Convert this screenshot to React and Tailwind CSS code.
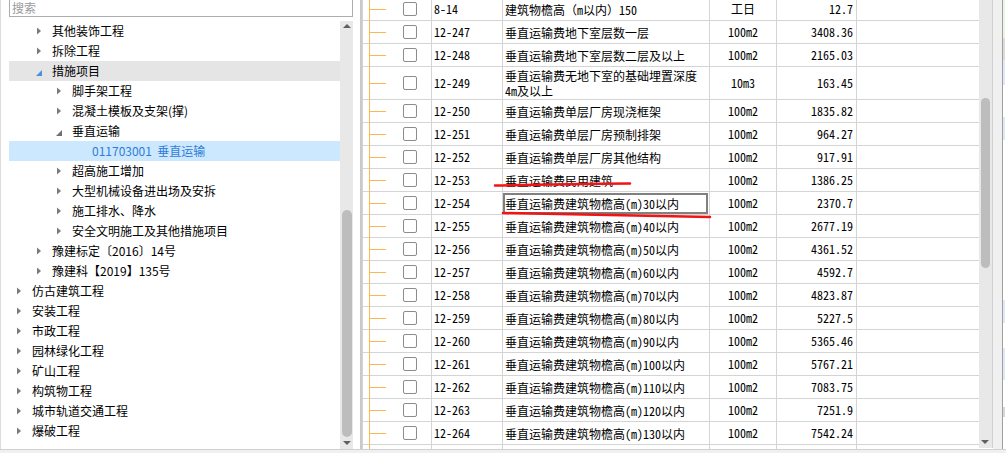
import React from 'react'

const TREE = [
  { label: '其他装饰工程', level: 1, arrow: 'right' },
  { label: '拆除工程', level: 1, arrow: 'right' },
  { label: '措施项目', level: 1, arrow: 'down', hover: true },
  { label: '脚手架工程', level: 2, arrow: 'right' },
  { label: '混凝土模板及支架(撑)', level: 2, arrow: 'right' },
  { label: '垂直运输', level: 2, arrow: 'down' },
  { label: '011703001  垂直运输', level: 3, selected: true },
  { label: '超高施工增加', level: 2, arrow: 'right' },
  { label: '大型机械设备进出场及安拆', level: 2, arrow: 'right' },
  { label: '施工排水、降水', level: 2, arrow: 'right' },
  { label: '安全文明施工及其他措施项目', level: 2, arrow: 'right' },
  { label: '豫建标定〔2016〕14号', level: 1, arrow: 'right' },
  { label: '豫建科【2019】135号', level: 1, arrow: 'right' },
  { label: '仿古建筑工程', level: 0, arrow: 'right' },
  { label: '安装工程', level: 0, arrow: 'right' },
  { label: '市政工程', level: 0, arrow: 'right' },
  { label: '园林绿化工程', level: 0, arrow: 'right' },
  { label: '矿山工程', level: 0, arrow: 'right' },
  { label: '构筑物工程', level: 0, arrow: 'right' },
  { label: '城市轨道交通工程', level: 0, arrow: 'right' },
  { label: '爆破工程', level: 0, arrow: 'right' },
]

const INDENT = ['pl-[6px]', 'pl-[26px]', 'pl-[46px]', 'pl-[66px]']

const ROWS = [
  ['8-14', '建筑物檐高（m以内）150', '工日', '12.7'],
  ['12-247', '垂直运输费地下室层数一层', '100m2', '3408.36'],
  ['12-248', '垂直运输费地下室层数二层及以上', '100m2', '2165.03'],
  ['12-249', '垂直运输费无地下室的基础埋置深度|4m及以上', '10m3', '163.45'],
  ['12-250', '垂直运输费单层厂房现浇框架', '100m2', '1835.82'],
  ['12-251', '垂直运输费单层厂房预制排架', '100m2', '964.27'],
  ['12-252', '垂直运输费单层厂房其他结构', '100m2', '917.91'],
  ['12-253', '垂直运输费民用建筑', '100m2', '1386.25'],
  ['12-254', '垂直运输费建筑物檐高(m)30以内', '100m2', '2370.7'],
  ['12-255', '垂直运输费建筑物檐高(m)40以内', '100m2', '2677.19'],
  ['12-256', '垂直运输费建筑物檐高(m)50以内', '100m2', '4361.52'],
  ['12-257', '垂直运输费建筑物檐高(m)60以内', '100m2', '4592.7'],
  ['12-258', '垂直运输费建筑物檐高(m)70以内', '100m2', '4823.87'],
  ['12-259', '垂直运输费建筑物檐高(m)80以内', '100m2', '5227.5'],
  ['12-260', '垂直运输费建筑物檐高(m)90以内', '100m2', '5365.46'],
  ['12-261', '垂直运输费建筑物檐高(m)100以内', '100m2', '5767.21'],
  ['12-262', '垂直运输费建筑物檐高(m)110以内', '100m2', '7083.75'],
  ['12-263', '垂直运输费建筑物檐高(m)120以内', '100m2', '7251.9'],
  ['12-264', '垂直运输费建筑物檐高(m)130以内', '100m2', '7542.24'],
  ['', '', '', ''],
]

function Arrow({ type, blue }) {
  if (type === 'right') {
    return (
      <svg width="5" height="8" viewBox="0 0 5 8" className="ml-[2px]">
        <polygon points="0,0.5 4,4 0,7.5" fill="#7a7a7a" />
      </svg>
    )
  }
  if (type === 'down') {
    return (
      <svg width="6" height="6" viewBox="0 0 6 6" className="ml-[1px] mt-[3px]">
        <polygon points="6,0 6,6 0,6" fill={blue ? '#4a90e2' : '#707070'} />
      </svg>
    )
  }
  return null
}

function TriUp() {
  return (
    <svg width="8" height="4" viewBox="0 0 8 4">
      <polygon points="0,4 4,0 8,4" fill="#606060" />
    </svg>
  )
}

function TriDown() {
  return (
    <svg width="8" height="4" viewBox="0 0 8 4">
      <polygon points="0,0 8,0 4,4" fill="#606060" />
    </svg>
  )
}

function TreeRow({ item }) {
  const bg = item.selected ? 'bg-[#cce8ff] text-[#2f7bd8]' : item.hover ? 'bg-[#e5e5e5] text-black' : 'text-black'
  return (
    <div className={`flex items-center h-[20px] ${INDENT[item.level]} ${bg}`}>
      <div className="w-[17px] shrink-0 flex items-center">
        <Arrow type={item.arrow} blue={item.hover} />
      </div>
      <span className="whitespace-pre">{item.label}</span>
    </div>
  )
}

function TableRow({ row, active }) {
  const [code, name, unit, value] = row
  const tall = name.includes('|')
  const lines = name.split('|')
  return (
    <div className={`flex shrink-0 border-b border-[#d4d4d4] ${tall ? 'h-[33px]' : 'h-[23px]'}`}>
      <div className="relative w-[69px] shrink-0 border-r border-[#d4d4d4]">
        {code && (
          <>
            <div className="absolute left-[7px] top-1/2 h-px w-[16px] bg-[#fbb84f]" />
            <div className="absolute left-[40px] top-1/2 -translate-y-1/2 size-[14px] rounded-[2px] border border-[#8c8c8c] bg-white" />
          </>
        )}
      </div>
      <div className="w-[71px] shrink-0 border-r border-[#d4d4d4] flex items-center pl-[2px]">{code}</div>
      <div className="relative w-[207px] shrink-0 border-r border-[#d4d4d4] flex flex-col justify-center pl-[2px] leading-[15px]">
        {lines.map((l) => (
          <span key={l} className="whitespace-nowrap">{l}</span>
        ))}
        {active && <div className="absolute left-0 right-px top-px bottom-0 border-2 border-[#808080]" />}
      </div>
      <div className="w-[67px] shrink-0 border-r border-[#d4d4d4] flex items-center justify-center">{unit}</div>
      <div className="w-[80px] shrink-0 border-r border-[#d4d4d4] flex items-center justify-end pr-[3px]">{value}</div>
    </div>
  )
}

export default function App() {
  return (
    <div className="relative w-[1006px] h-[453px] bg-white overflow-hidden flex flex-col">
      <div className="flex h-[449px]">
        {/* Left tree panel */}
        <div className="w-[355px] shrink-0 flex flex-col border-l border-[#dcdcdc] pl-[8px] pr-[2px] text-[12px] [font-family:'Noto_Sans_CJK_SC',sans-serif]">
          <div className="h-[21px] -mt-[4px] border border-[#abadb3] flex items-end pl-[2px] text-[#9a9a9a] leading-[17px]">
            搜索
          </div>
          <div className="flex flex-1 mt-[4px] min-h-0">
            <div className="flex-1 flex flex-col overflow-hidden leading-[20px]">
              {TREE.map((item) => (
                <TreeRow key={item.label} item={item} />
              ))}
            </div>
            <div className="relative w-[13px] bg-[#e8e8e8]">
              <div className="absolute top-[3px] left-[3px]"><TriUp /></div>
              <div className="absolute top-[189px] bottom-[12px] left-[2px] right-[1px] rounded-full bg-[#bdbdbd]" />
              <div className="absolute bottom-[4px] left-[3px]"><TriDown /></div>
            </div>
          </div>
        </div>

        <div className="w-[5px] shrink-0" />
        <div className="w-[2px] shrink-0 bg-[#c9c9c9]" />

        {/* Right quota table */}
        <div className="relative w-[617px] shrink-0 border-l border-[#d4d4d4] overflow-hidden text-[12px] text-black [font-family:'Noto_Sans_Mono_CJK_SC','Noto_Sans_CJK_SC',monospace]">
          <div className="-mt-[2px] flex flex-col">
            {ROWS.map((row, i) => (
              <TableRow key={i} row={row} active={row[0] === '12-254'} />
            ))}
          </div>
          {/* tree connector line */}
          <div className="absolute left-[6px] top-0 h-full w-px bg-[#fbb84f]" />
        </div>

        {/* Right scrollbar */}
        <div className="relative w-[14px] shrink-0 bg-[#e8e8e8] border-r border-[#d0d0d0] mb-px">
          <div className="absolute top-[98px] h-[170px] left-[2px] right-[2px] rounded-full bg-[#bdbdbd]" />
          <div className="absolute bottom-[4px] left-[2px]"><TriDown /></div>
        </div>
        <div className="w-[10px] shrink-0 bg-[#f0f0f0] border-r border-[#a0a0a0]" />
        <div className="w-[2px] shrink-0 flex flex-col">
          <div className="h-[38px] bg-[#eaf5e2]" />
          <div className="h-[22px] bg-[#dcdcdc]" />
          <div className="h-[25px] bg-[#dde8fb]" />
          <div className="h-[32px] bg-white" />
          <div className="h-[23px] bg-[#dde8fb]" />
          <div className="h-[160px] bg-white" />
          <div className="h-[23px] bg-[#dde8fb]" />
          <div className="h-[25px] bg-white" />
          <div className="h-[32px] bg-[#dde8fb]" />
          <div className="h-[27px] bg-white" />
          <div className="h-[10px] bg-[#d8d8d8]" />
          <div className="flex-1 bg-white" />
        </div>
      </div>
      <div className="h-[4px] bg-[#f0f0f0] border-t border-[#d0d0d0]" />

      {/* red hand-drawn marks */}
      <svg className="absolute inset-0 pointer-events-none" width="1006" height="453">
        <path d="M495 185.5 Q560 184 630 183.5" stroke="#f01414" strokeWidth="2.5" fill="none" strokeLinecap="round" />
        <path d="M503 213 Q600 215 710 217" stroke="#f01414" strokeWidth="2.5" fill="none" strokeLinecap="round" />
      </svg>
    </div>
  )
}
